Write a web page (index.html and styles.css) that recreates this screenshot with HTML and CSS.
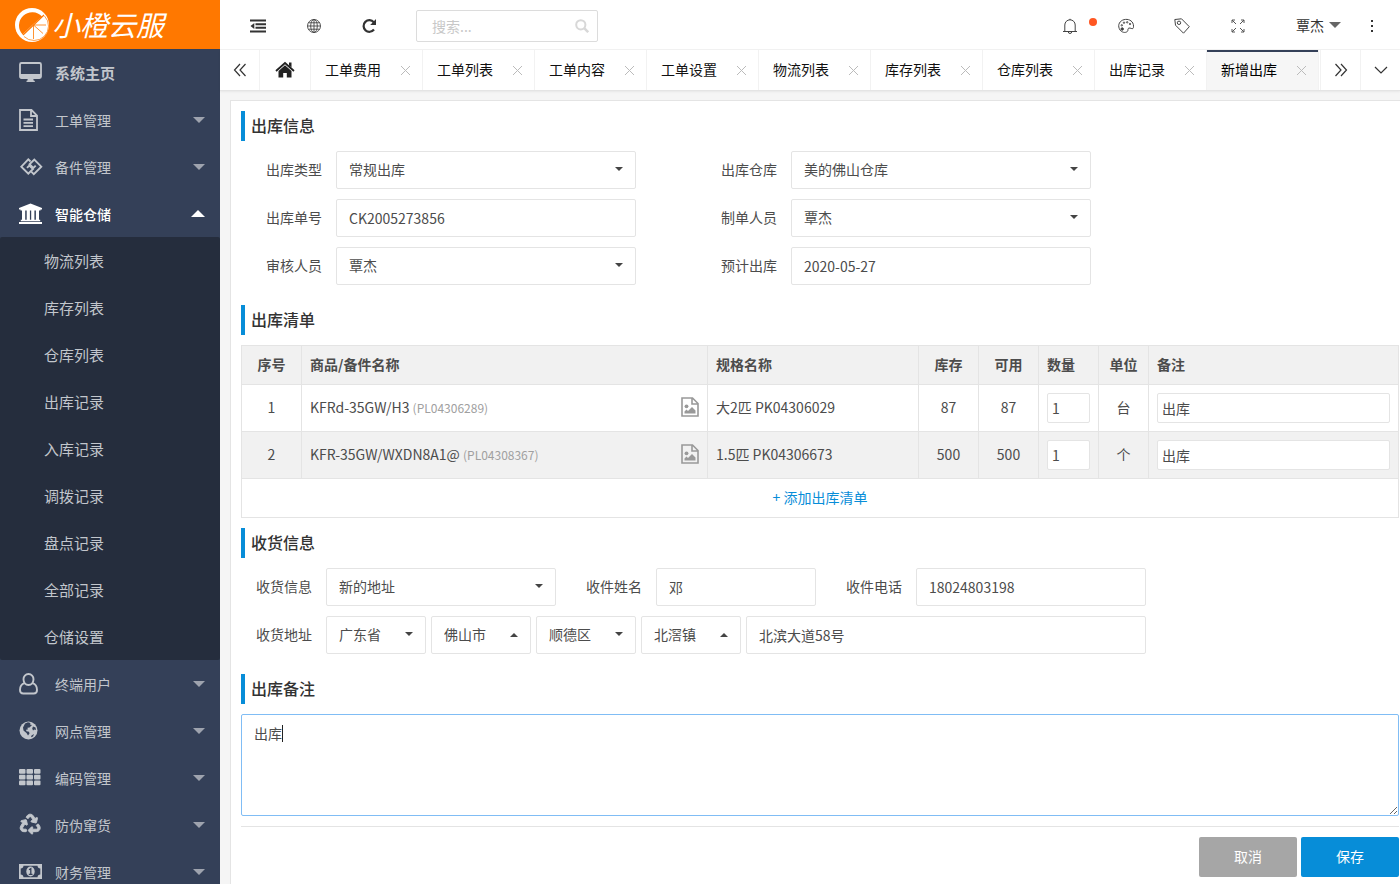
FILE: index.html
```html
<!DOCTYPE html>
<html lang="zh-CN">
<head>
<meta charset="utf-8">
<title>新增出库 - 小橙云服</title>
<link rel="stylesheet" href="styles.css">
</head>
<body>
<div class="app">
  <aside class="sidebar">
    <div class="logo">
      <svg width="34" height="34" viewBox="0 0 34 34" aria-hidden="true">
        <circle cx="17" cy="17" r="17" fill="#fff"/>
        <path d="M7.500 26.500A11 11 0 1 1 27 8.500L18.500 16z" fill="#ff7800"/>
        <path d="M8 27L29 7" stroke="#ff7800" stroke-width="1.200"/>
        <path d="M29.500 8A14.500 14.500 0 0 1 9 28.500" fill="none" stroke="#ff7800" stroke-width=".7"/>
        <path d="M18.500 17H31M18.500 17l9.500 8.500M18.500 17v14" stroke="#ff7800" stroke-width=".8" fill="none"/>
      </svg>
      <span class="logo-text">小橙云服</span>
    </div>
    <nav class="menu">
      <a class="menu-item home" href="#">
        <svg class="menu-icon" viewBox="0 0 24 24"><rect x="1" y="2" width="21" height="15" rx="1.500" fill="none" stroke="currentColor" stroke-width="1.800"/><path d="M1 13h21v4H1zM9 17h5l.8 2.800h1V21H7.500v-1.200h.8z" fill="currentColor"/></svg>
        <span class="menu-text">系统主页</span>
      </a>
      <a class="menu-item" href="#">
        <svg class="menu-icon" viewBox="0 0 24 24"><path d="M2 2h10.500L18 7.500V22H1V2zM12 2v6h6M4.500 11.500h9.500M4.500 14.800h9.500M4.500 18.200h9.500" fill="none" stroke="currentColor" stroke-width="1.800"/></svg>
        <span class="menu-text">工单管理</span><i class="arrow"></i>
      </a>
      <a class="menu-item" href="#">
        <svg class="menu-icon" viewBox="0 0 24 24"><path d="M11.500 6.500L9.300 4.300 2.300 11.700l7 7 4.700-4.700-3.700-3.500-2.300 2.300M12.500 16.800l2.300 2.300 7.500-7.400-7-7.200-4.800 4.700 3.900 3.700 2.300-2.300" fill="none" stroke="currentColor" stroke-width="1.900"/></svg>
        <span class="menu-text">备件管理</span><i class="arrow"></i>
      </a>
      <a class="menu-item open" href="#">
        <svg class="menu-icon" viewBox="0 0 24 24"><path d="M11.500 1.500L23 6v1.500h-1.500v1H1.500v-1H0V6zM3 8.500h3.200v9.300h1.500V8.500h3.200v9.300h1.300V8.500h3.200v9.300h1.500V8.500h3.100v9.300h1.200v1.400H1.800v-1.400H3zM0 20h23v2H0z" fill="currentColor"/></svg>
        <span class="menu-text">智能仓储</span><i class="arrow up"></i>
      </a>
      <div class="submenu">
        <a href="#">物流列表</a>
        <a href="#">库存列表</a>
        <a href="#">仓库列表</a>
        <a href="#">出库记录</a>
        <a href="#">入库记录</a>
        <a href="#">调拨记录</a>
        <a href="#">盘点记录</a>
        <a href="#">全部记录</a>
        <a href="#">仓储设置</a>
      </div>
      <a class="menu-item" href="#">
        <svg class="menu-icon" viewBox="0 0 24 24"><path d="M9.500 2a5 5 0 0 1 5 5.300c0 3-2 5.700-5 5.700s-5-2.700-5-5.700A5 5 0 0 1 9.500 2zM5.600 11.200C2.800 12 1 14.500 1 18c0 2.200 1.300 3.500 3.300 3.500h10.400c2 0 3.300-1.300 3.300-3.500 0-3.500-1.800-6-4.600-6.800" fill="none" stroke="currentColor" stroke-width="1.900"/></svg>
        <span class="menu-text">终端用户</span><i class="arrow"></i>
      </a>
      <a class="menu-item" href="#">
        <svg class="menu-icon" viewBox="0 0 24 24"><circle cx="9.500" cy="11.500" r="9" fill="currentColor"/><path d="M6 4.500l3-1.200 2.500.7-.5 1.500 2 .5-2.500 2.500-2 .3.300 1.700-1.800.3.500 1.500 2.500.5.500 1.700-1.500 2-1.500-2.500-3-2.500-.5-3zM14 7.500l2.500 1 .5 2.500-1.500-.5-1.500 1-.8-2zM12.500 16.500l2.500-1.500-1 2.500-2 .8z" fill="#344058"/></svg>
        <span class="menu-text">网点管理</span><i class="arrow"></i>
      </a>
      <a class="menu-item" href="#">
        <svg class="menu-icon" viewBox="0 0 24 24" fill="currentColor"><rect x="0" y="3" width="6.500" height="4.800" rx="1"/><rect x="7.500" y="3" width="6.500" height="4.800" rx="1"/><rect x="15" y="3" width="6.500" height="4.800" rx="1"/><rect x="0" y="8.800" width="6.500" height="4.800" rx="1"/><rect x="7.500" y="8.800" width="6.500" height="4.800" rx="1"/><rect x="15" y="8.800" width="6.500" height="4.800" rx="1"/><rect x="0" y="14.500" width="6.500" height="4.800" rx="1"/><rect x="7.500" y="14.500" width="6.500" height="4.800" rx="1"/><rect x="15" y="14.500" width="6.500" height="4.800" rx="1"/></svg>
        <span class="menu-text">编码管理</span><i class="arrow"></i>
      </a>
      <a class="menu-item" href="#">
        <svg class="menu-icon" viewBox="-30 -30 614 614"><path fill="currentColor" stroke="currentColor" stroke-width="24" d="M184.561 261.903c3.232 13.997-12.123 24.635-24.068 17.168l-40.736-25.455-50.867 81.402C55.606 356.273 70.960 384 96.012 384H148c6.627 0 12 5.373 12 12v40c0 6.627-5.373 12-12 12H96.115c-75.334 0-121.302-83.048-81.408-146.880l50.822-81.388-40.725-25.448c-12.081-7.547-8.966-25.961 4.879-29.158l110.237-25.450c8.611-1.988 17.201 3.381 19.189 11.990l25.452 110.237zm98.561-182.915l41.289 66.076-40.740 25.457c-12.051 7.528-9 25.953 4.879 29.158l110.237 25.450c8.672 1.999 17.215-3.438 19.189-11.990l25.450-110.237c3.197-13.844-11.990-24.719-24.068-17.168l-40.687 25.424-41.263-66.082c-37.521-60.033-125.209-60.171-162.816 0l-17.963 28.766c-3.510 5.620-1.800 13.021 3.820 16.533l33.919 21.195c5.620 3.512 13.024 1.803 16.536-3.817l17.961-28.743c12.712-20.341 41.973-19.676 54.257-.022zM497.288 301.120l-27.515-44.065c-3.511-5.623-10.916-7.334-16.538-3.821l-33.861 21.159c-5.620 3.512-7.330 10.915-3.818 16.536l27.564 44.112c13.257 21.211-2.057 48.960-27.136 48.960H320V336.020c0-14.213-17.242-21.383-27.313-11.313l-80 79.981c-6.249 6.248-6.249 16.379 0 22.627l80 79.989C302.689 517.308 320 510.300 320 495.989V448h95.880c75.274 0 121.335-82.997 81.408-146.880z"/></svg>
        <span class="menu-text">防伪窜货</span><i class="arrow"></i>
      </a>
      <a class="menu-item" href="#">
        <svg class="menu-icon" viewBox="0 0 24 24"><path fill="currentColor" fill-rule="evenodd" d="M0 4h23v15H0zM4.500 5.700c0 1.600-1.200 2.800-2.800 2.800v6c1.600 0 2.800 1.200 2.800 2.800h14c0-1.600 1.200-2.800 2.800-2.800v-6c-1.600 0-2.800-1.200-2.800-2.800z"/><ellipse cx="11.500" cy="11.500" rx="4.200" ry="5" fill="currentColor"/><path d="M10 9.800l1.800-1.200v5.600M9.800 14.300h3.700" fill="none" stroke="#344058" stroke-width="1.300"/></svg>
        <span class="menu-text">财务管理</span><i class="arrow"></i>
      </a>
    </nav>
  </aside>

  <div class="main">
    <header class="topbar">
      <button class="tool" type="button" aria-label="收起菜单"><svg width="16" height="16" viewBox="0 0 16 16"><path d="M0 2.500h16M5.500 6.200H16M5.500 9.800H16M0 13.500h16" stroke="#333" stroke-width="2"/><path d="M4.300 5v6L.5 8z" fill="#333"/></svg></button>
      <button class="tool" type="button" aria-label="网站"><svg width="16" height="16" viewBox="0 0 16 16" fill="none" stroke="#444" stroke-width=".9"><circle cx="8" cy="8" r="6.500"/><ellipse cx="8" cy="8" rx="3.300" ry="6.500"/><path d="M8 1.500v13M1.500 8h13M2.400 4.800h11.200M2.400 11.200h11.200"/></svg></button>
      <button class="tool" type="button" aria-label="刷新"><svg width="16" height="16" viewBox="0 0 16 16"><path d="M11.800 4.200A5.800 5.800 0 1 0 12 11.500" fill="none" stroke="#333" stroke-width="2.200"/><path d="M14 1v6H8.200z" fill="#333"/></svg></button>
      <label class="search"><input type="text" placeholder="搜索..." aria-label="搜索"><svg width="14" height="14" viewBox="0 0 14 14" fill="none" stroke="#d8d8d8" stroke-width="2"><circle cx="5.800" cy="5.800" r="4.600"/><path d="M9.200 9.200l4 4" stroke-width="2.500"/></svg></label>
      <div class="topbar-right">
        <button class="tool notice" type="button" aria-label="通知"><svg width="16" height="16" viewBox="0 0 16 16" fill="none" stroke="#444"><path d="M1 13.500h14M2.800 13.500V7a5.200 5.200 0 0 1 10.400 0v6.500M8 2V.8M6.300 13.800a1.700 1.700 0 0 0 3.400 0"/></svg><span class="dot"></span></button>
        <button class="tool" type="button" aria-label="主题"><svg width="16" height="16" viewBox="0 0 16 16" fill="none" stroke="#444"><path d="M2 12C-.5 8 .8 4 4.500 2.200c4-1.800 8.500-.6 10.300 2.800 1 2.200.9 4.500.3 5.300-1.100 1.200-2.600-.8-4.300-.2-1.600.7-.3 2.400-1.500 3.400C7.500 15.200 3.800 14.500 2 12z"/><circle cx="4.200" cy="11" r="1.200" fill="#444"/><circle cx="3.800" cy="7.300" r=".7"/><circle cx="6" cy="4.700" r=".7"/><circle cx="9.200" cy="4.300" r=".7"/><circle cx="12" cy="6" r=".7"/></svg></button>
        <button class="tool" type="button" aria-label="标签"><svg width="16" height="16" viewBox="0 0 16 16" fill="none" stroke="#444"><path d="M.8 1.500L7.500.8l7.800 7.900-5.800 6.500L1.500 7.200z"/><circle cx="5" cy="4.800" r="1.700"/></svg></button>
        <button class="tool" type="button" aria-label="全屏"><svg width="16" height="16" viewBox="0 0 16 16" fill="none" stroke="#555"><path d="M2 5V2h3M2 2l4 4M11 2h3v3M14 2l-4 4M2 11v3h3M2 14l4-4M11 14h3v-3M14 14l-4-4"/></svg></button>
        <button class="user" type="button"><span>覃杰</span><i class="arrow"></i></button>
        <button class="tool" type="button" aria-label="更多"><svg width="16" height="16" viewBox="0 0 16 16" fill="#333"><path d="M7 2h2v2H7zM7 7h2v2H7zM7 12h2v2H7z"/></svg></button>
      </div>
    </header>

    <div class="tabbar">
      <button class="tab-ctl left" type="button" aria-label="向左"><svg width="14" height="14" viewBox="0 0 14 14" fill="none" stroke="#333" stroke-width="1.200"><path d="M7 1L1.500 7 7 13M12.500 1L7 7l5.500 6"/></svg></button>
      <button class="tab-ctl left home-tab" type="button" aria-label="主页"><svg width="20" height="18" viewBox="0 0 20 18" fill="#222"><path d="M10 4.200l6.500 5.800v6.500h-4.700V12H8.200v4.500H3.500V10z"/><path d="M1 10l9-8 9 8" fill="none" stroke="#222" stroke-width="1.800"/><path d="M14 1.500h2.500v5L14 4.500z"/></svg></button>
      <div class="tabs">
        <a class="tab" href="#"><span>工单费用</span><i class="close"></i></a>
        <a class="tab" href="#"><span>工单列表</span><i class="close"></i></a>
        <a class="tab" href="#"><span>工单内容</span><i class="close"></i></a>
        <a class="tab" href="#"><span>工单设置</span><i class="close"></i></a>
        <a class="tab" href="#"><span>物流列表</span><i class="close"></i></a>
        <a class="tab" href="#"><span>库存列表</span><i class="close"></i></a>
        <a class="tab" href="#"><span>仓库列表</span><i class="close"></i></a>
        <a class="tab" href="#"><span>出库记录</span><i class="close"></i></a>
        <a class="tab active" href="#"><span>新增出库</span><i class="close"></i></a>
      </div>
      <button class="tab-ctl right" type="button" aria-label="向右"><svg width="14" height="14" viewBox="0 0 14 14" fill="none" stroke="#333" stroke-width="1.200"><path d="M1.500 1L7 7l-5.500 6M7 1l5.500 6L7 13"/></svg></button>
      <button class="tab-ctl right" type="button" aria-label="展开"><svg width="14" height="14" viewBox="0 0 14 14" fill="none" stroke="#333" stroke-width="1.200"><path d="M1 4l6 6 6-6"/></svg></button>
    </div>

    <form class="panel">
      <h2 class="title">出库信息</h2>
      <div class="info-grid">
        <div class="field"><label for="type">出库类型</label><div class="select w300"><select id="type"><option>常规出库</option></select></div></div>
        <div class="field"><label for="depot">出库仓库</label><div class="select w300"><select id="depot"><option>美的佛山仓库</option></select></div></div>
        <div class="field"><label for="no">出库单号</label><input class="text w300" id="no" type="text" value="CK2005273856"></div>
        <div class="field"><label for="maker">制单人员</label><div class="select w300"><select id="maker"><option>覃杰</option></select></div></div>
        <div class="field"><label for="auditor">审核人员</label><div class="select w300"><select id="auditor"><option>覃杰</option></select></div></div>
        <div class="field"><label for="date">预计出库</label><input class="text w300" id="date" type="text" value="2020-05-27"></div>
      </div>

      <h2 class="title spaced">出库清单</h2>
      <table class="list">
        <colgroup><col class="c60"><col><col class="c211"><col class="c60"><col class="c60"><col class="c60"><col class="c50"><col class="c250"></colgroup>
        <thead>
          <tr><th class="center">序号</th><th>商品/备件名称</th><th>规格名称</th><th class="center">库存</th><th class="center">可用</th><th>数量</th><th class="center">单位</th><th>备注</th></tr>
        </thead>
        <tbody>
          <tr>
            <td class="center">1</td>
            <td><div class="goods"><span>KFRd-35GW/H3 <small>(PL04306289)</small></span><svg width="18" height="20" viewBox="0 0 18 20"><path d="M1 1h10.500L17 6.500V19H1zM11 1v6h6" fill="none" stroke="#999" stroke-width="1.600"/><circle cx="5.500" cy="9.300" r="1.900" fill="#999"/><path d="M3.500 16.500v-2l2-2 1.500 1.500 4-4 3.500 3.500v3z" fill="#999"/></svg></div></td>
            <td>大2匹 PK04306029</td><td class="center">87</td><td class="center">87</td>
            <td class="entry"><input class="cell" type="text" value="1" aria-label="数量"></td><td class="center">台</td>
            <td class="entry"><input class="cell" type="text" value="出库" aria-label="备注"></td>
          </tr>
          <tr class="even">
            <td class="center">2</td>
            <td><div class="goods"><span>KFR-35GW/WXDN8A1@ <small>(PL04308367)</small></span><svg width="18" height="20" viewBox="0 0 18 20"><path d="M1 1h10.500L17 6.500V19H1zM11 1v6h6" fill="none" stroke="#999" stroke-width="1.600"/><circle cx="5.500" cy="9.300" r="1.900" fill="#999"/><path d="M3.500 16.500v-2l2-2 1.500 1.500 4-4 3.500 3.500v3z" fill="#999"/></svg></div></td>
            <td>1.5匹 PK04306673</td><td class="center">500</td><td class="center">500</td>
            <td class="entry"><input class="cell" type="text" value="1" aria-label="数量"></td><td class="center">个</td>
            <td class="entry"><input class="cell" type="text" value="出库" aria-label="备注"></td>
          </tr>
          <tr class="add"><td class="center" colspan="8"><a href="#">+ 添加出库清单</a></td></tr>
        </tbody>
      </table>

      <h2 class="title after-table">收货信息</h2>
      <div class="ship-row">
        <div class="field"><label for="addr">收货信息</label><div class="select w230"><select id="addr"><option>新的地址</option></select></div></div>
        <div class="field"><label for="name">收件姓名</label><input class="text w160" id="name" type="text" value="邓"></div>
        <div class="field"><label for="phone">收件电话</label><input class="text w230" id="phone" type="text" value="18024803198"></div>
      </div>
      <div class="ship-row">
        <div class="field"><label for="prov">收货地址</label>
          <div class="region">
            <div class="select w100"><select id="prov"><option>广东省</option></select></div>
            <div class="select w100 up"><select aria-label="市"><option>佛山市</option></select></div>
            <div class="select w100"><select aria-label="区"><option>顺德区</option></select></div>
            <div class="select w100 up"><select aria-label="镇"><option>北滘镇</option></select></div>
            <input class="text w400" type="text" value="北滨大道58号" aria-label="详细地址">
          </div>
        </div>
      </div>

      <h2 class="title spaced">出库备注</h2>
      <div class="note"><textarea aria-label="出库备注">出库</textarea><i class="cursor"></i></div>
      <div class="actions">
        <button class="btn cancel" type="button">取消</button>
        <button class="btn save" type="button">保存</button>
      </div>
    </form>
  </div>
</div>
</body>
</html>
```

FILE: styles.css
```css
* { box-sizing: border-box; }
body {
  margin: 0;
  font: 14px/20px "Noto Sans CJK SC", sans-serif;
  color: #4c4c4c;
  background: #f5f5f5;
}
a { color: inherit; text-decoration: none; }
button, input, select, textarea { font: inherit; color: inherit; }
button { border: 0; padding: 0; background: none; }
svg { display: block; flex: none; }

.app { display: flex; height: 100vh; overflow: hidden; }

/* Sidebar */
.sidebar { flex: none; width: 220px; overflow: hidden; background: #344058; color: #c2c6cc; }
.logo {
  display: flex; align-items: center; gap: 3px;
  height: 49px; padding-left: 15px;
  background: #ff7800; color: #fff;
}
.logo-text { font-size: 28px; line-height: 49px; font-style: italic; }
.menu-item { display: flex; align-items: center; height: 47px; padding: 0 15px 0 19px; }
.menu-icon { width: 24px; height: 24px; }
.menu-text { flex: 1; margin-left: 12px; }
.home .menu-text { font-size: 15px; font-weight: 700; }
.open { color: #fff; font-weight: 500; }
.arrow {
  width: 0; height: 0;
  border: 6px solid transparent; border-bottom-width: 0; border-top-color: #9ea3ae;
}
.arrow.up { border-width: 0 7px 7px; border-bottom-color: #fff; }
.submenu { background: #252d3d; border-radius: 2px; }
.submenu a { display: block; height: 47px; padding-left: 44px; font-size: 15px; line-height: 47px; }

/* Top bar */
.main { flex: 1; min-width: 0; display: flex; flex-direction: column; }
.topbar {
  flex: none; display: flex; align-items: center;
  height: 50px; padding-left: 10px;
  background: #fff; border-bottom: 1px solid #f2f2f2; color: #333;
}
.tool { display: flex; align-items: center; justify-content: center; width: 56px; height: 48px; padding-top: 3px; }
.search {
  display: flex; align-items: center;
  width: 182px; height: 32px; margin: 3px 0 0 18px; padding: 0 8px 0 15px;
  border: 1px solid #dcdcdc; border-radius: 2px;
}
.search input { flex: 1; min-width: 0; padding: 0; border: 0; outline: 0; background: none; }
.search input::placeholder { color: #c8c8c8; }
.topbar-right { display: flex; align-items: center; margin-left: auto; }
.notice { position: relative; }
.dot { position: absolute; top: 17px; right: 1px; width: 8px; height: 8px; border-radius: 50%; background: #ff5722; }
.user { display: flex; align-items: center; gap: 5px; width: 78px; padding-left: 30px; }
.user .arrow { border-top-color: #666; }

/* Tab bar */
.tabbar {
  flex: none; display: flex; height: 41px;
  background: #fff; border-bottom: 1px solid #e4e4e4; box-shadow: 0 1px 2px rgba(0, 0, 0, .06);
}
.tab-ctl { flex: none; display: flex; align-items: center; justify-content: center; width: 40px; border: 0 solid #f2f2f2; }
.tab-ctl.left { border-right-width: 1px; }
.tab-ctl.right { border-left-width: 1px; }
.tab-ctl.home-tab { width: 51px; }
.tabs { flex: 1; min-width: 0; display: flex; overflow: hidden; }
.tab {
  flex: none; display: flex; align-items: center; justify-content: space-between;
  width: 112px; padding: 0 11px 0 14px;
  border-right: 1px solid #f2f2f2; color: #111;
}
.tab span { padding-bottom: 2px; }
.tab.active { background: #f6f6f6; box-shadow: inset 0 2px #344058; color: #000; }
.close {
  width: 11px; height: 11px;
  background:
    linear-gradient(45deg, transparent 47%, #bbb 47%, #bbb 54%, transparent 54%) center / 9px 9px no-repeat,
    linear-gradient(-45deg, transparent 47%, #bbb 47%, #bbb 54%, transparent 54%) center / 9px 9px no-repeat;
}

/* Form panel */
.panel {
  flex: 1; margin: 9px 0 0 10px; padding: 10px 1px 0 10px;
  background: #fff; border: solid #e4e4e4; border-width: 1px 0 0 1px;
}
.title {
  margin: 0 0 10px; padding: 0 0 2px 6px; border-left: 4px solid #078dd8;
  font-size: 16px; line-height: 28px; font-weight: 500; color: #333;
}
.title.spaced { margin-top: 20px; }
.title.after-table { margin-top: 10px; }
.field { display: flex; align-items: center; gap: 14px; }
.field label { padding-bottom: 2px; }
.info-grid {
  display: grid; grid-template-columns: max-content max-content;
  gap: 10px 85px; padding-left: 25px;
}
.ship-row { display: flex; gap: 30px; padding-left: 15px; }
.ship-row + .ship-row { margin-top: 10px; }
.region { display: flex; gap: 5px; }
.text, .select select {
  display: block; height: 38px; padding: 0 12px;
  border: 1px solid #e4e4e4; border-radius: 2px; outline: 0; background: #fff;
}
.select { position: relative; }
.select select { width: 100%; padding-bottom: 2px; appearance: none; }
.select::after {
  content: ""; position: absolute; top: 16px; right: 13px;
  border: 4px solid transparent; border-bottom-width: 0; border-top-color: #444;
}
.select.up::after { border-width: 0 4px 4px; border-bottom-color: #444; top: 17px; }
.w100 { width: 100px; }
.w160 { width: 160px; }
.w230 { width: 230px; }
.w300 { width: 300px; }
.w400 { width: 400px; }

/* Item list */
.list { width: 100%; table-layout: fixed; border-collapse: collapse; }
.list th, .list td { height: 47px; padding: 0 8px 2px; border: 1px solid #e4e4e4; text-align: left; }
.list th { height: 39px; background: #f1f1f1; font-weight: 700; }
.list .entry { padding-bottom: 0; }
.list .center { text-align: center; }
.list .even { background: #f1f1f1; }
.list .add td { height: 39px; color: #078dd8; }
.c50 { width: 50px; }
.c60 { width: 60px; }
.c211 { width: 211px; }
.c250 { width: 250px; }
.goods { display: flex; align-items: center; justify-content: space-between; }
.goods small { font-size: 12px; color: #a0a0a0; }
.cell {
  display: block; width: 100%; height: 30px; padding: 0 4px;
  border: 1px solid #e4e4e4; border-radius: 2px; outline: 0; background: #fff;
}

/* Remark and actions */
.note { position: relative; }
.note textarea {
  display: block; width: 100%; height: 102px; padding: 8px 12px;
  border: 1px solid #80bdf5; border-radius: 2px; outline: 0; resize: both;
}
.cursor { position: absolute; top: 11px; left: 41px; width: 1px; height: 17px; background: #222; }
.actions {
  display: flex; justify-content: flex-end; gap: 4px;
  margin-top: 10px; padding-top: 10px; border-top: 1px solid #e4e4e4;
}
.btn { width: 98px; height: 40px; padding-bottom: 2px; border-radius: 2px; color: #fff; }
.cancel { background: #a6a6a6; }
.save { background: #078dd8; }
```
